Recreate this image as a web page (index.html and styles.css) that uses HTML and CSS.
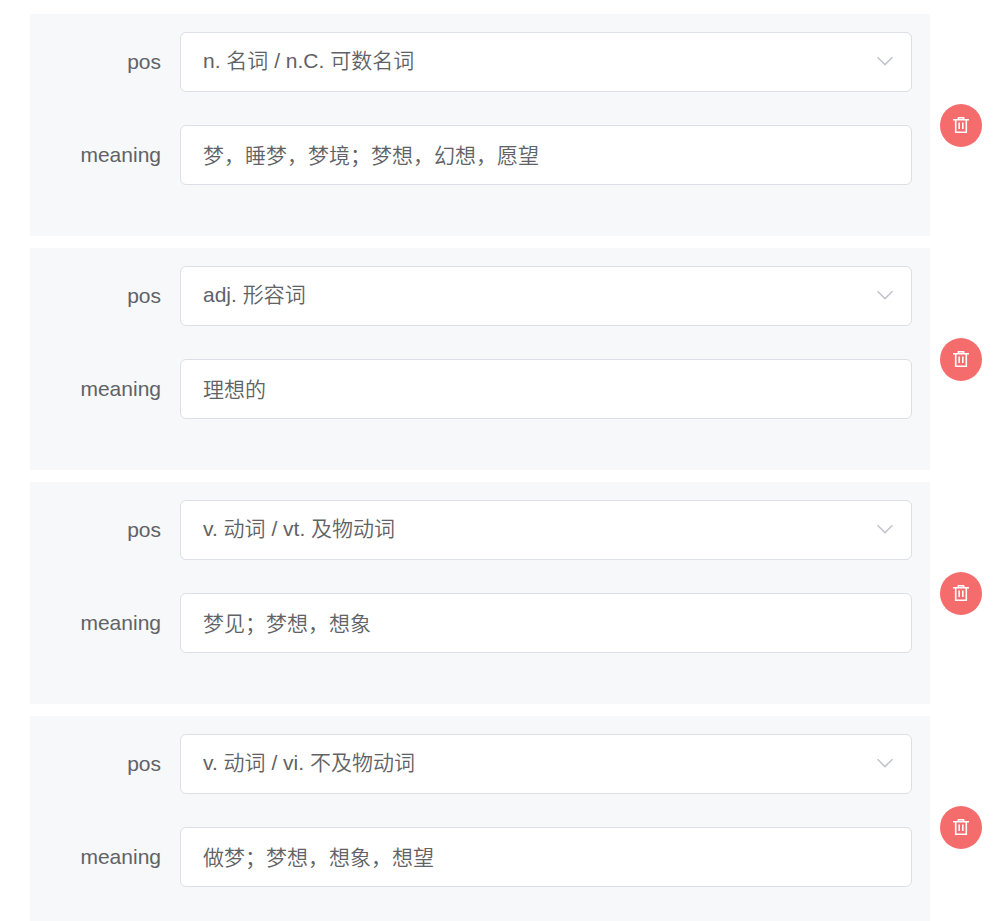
FILE: index.html
```html
<!DOCTYPE html>
<html lang="zh-CN">
<head>
  <meta charset="UTF-8" />
  <meta name="viewport" content="width=device-width, initial-scale=1.0"/>
  <title>Definitions</title>
  <link rel="stylesheet" href="styles.css">
</head>
<body>
  <svg class="sprite" aria-hidden="true">
    <symbol id="icon-delete" viewBox="0 0 20 20">
      <path d="M2 4.8h16M7.4 4.2V2.7h5.2v1.5M4.7 4.8v12.4h10.6V4.8M8.2 7.5v6.5M11.8 7.5v6.5" fill="none" stroke="currentColor" stroke-width="1.6"/>
    </symbol>
    <symbol id="icon-arrow" viewBox="0 0 18 10">
      <path d="M1.5 1.2L9 8.6l7.5-7.4" fill="none" stroke="currentColor" stroke-width="1.5"/>
    </symbol>
  </svg>

  <form class="definitions">
    <div class="definition">
      <div class="card">
        <label for="pos1">pos</label>
        <div class="select">
          <select id="pos1" class="field"><option>n. 名词 / n.C. 可数名词</option></select>
          <svg class="arrow"><use href="#icon-arrow"/></svg>
        </div>
        <label for="meaning1">meaning</label>
        <input type="text" id="meaning1" class="field" value="梦，睡梦，梦境；梦想，幻想，愿望" />
      </div>
      <button type="button" class="btn-delete" aria-label="delete"><svg><use href="#icon-delete"/></svg></button>
    </div>

    <div class="definition">
      <div class="card">
        <label for="pos2">pos</label>
        <div class="select">
          <select id="pos2" class="field"><option>adj. 形容词</option></select>
          <svg class="arrow"><use href="#icon-arrow"/></svg>
        </div>
        <label for="meaning2">meaning</label>
        <input type="text" id="meaning2" class="field" value="理想的" />
      </div>
      <button type="button" class="btn-delete" aria-label="delete"><svg><use href="#icon-delete"/></svg></button>
    </div>

    <div class="definition">
      <div class="card">
        <label for="pos3">pos</label>
        <div class="select">
          <select id="pos3" class="field"><option>v. 动词 / vt. 及物动词</option></select>
          <svg class="arrow"><use href="#icon-arrow"/></svg>
        </div>
        <label for="meaning3">meaning</label>
        <input type="text" id="meaning3" class="field" value="梦见；梦想，想象" />
      </div>
      <button type="button" class="btn-delete" aria-label="delete"><svg><use href="#icon-delete"/></svg></button>
    </div>

    <div class="definition">
      <div class="card">
        <label for="pos4">pos</label>
        <div class="select">
          <select id="pos4" class="field"><option>v. 动词 / vi. 不及物动词</option></select>
          <svg class="arrow"><use href="#icon-arrow"/></svg>
        </div>
        <label for="meaning4">meaning</label>
        <input type="text" id="meaning4" class="field" value="做梦；梦想，想象，想望" />
      </div>
      <button type="button" class="btn-delete" aria-label="delete"><svg><use href="#icon-delete"/></svg></button>
    </div>
  </form>
</body>
</html>
```
FILE: styles.css
```css
* {
  box-sizing: border-box;
}
body {
  margin: 0;
  background: #fff;
  color: #606266;
  font-family: "Liberation Sans", "Noto Sans CJK SC", sans-serif;
  font-size: 21px;
  font-weight: 350;
}
.sprite {
  display: none;
}
.definitions {
  display: flex;
  flex-direction: column;
  gap: 12px;
  padding: 14px 16px 0 30px;
}
.definition {
  display: flex;
  align-items: center;
  gap: 10px;
}
.card {
  flex: 1;
  display: grid;
  grid-template-columns: 113px 1fr;
  column-gap: 19px;
  row-gap: 33px;
  align-items: center;
  padding: 18px 18px 51px;
  background: #f7f8fa;
}
.card label {
  text-align: right;
}
.field {
  display: block;
  width: 100%;
  height: 60px;
  padding: 0 22px 3px;
  border: 1px solid #dcdfe6;
  border-radius: 6px;
  background: #fff;
  color: inherit;
  font: inherit;
  appearance: none;
}
.select {
  position: relative;
}
.arrow {
  position: absolute;
  top: 24px;
  right: 18px;
  width: 18px;
  height: 10px;
  color: #c0c4cc;
  pointer-events: none;
}
.btn-delete {
  display: flex;
  align-items: center;
  justify-content: center;
  width: 42px;
  height: 43px;
  padding: 0;
  border: none;
  border-radius: 50%;
  background: #f56c6c;
  color: #fff;
  cursor: pointer;
}
.btn-delete svg {
  width: 20px;
  height: 20px;
}
```
